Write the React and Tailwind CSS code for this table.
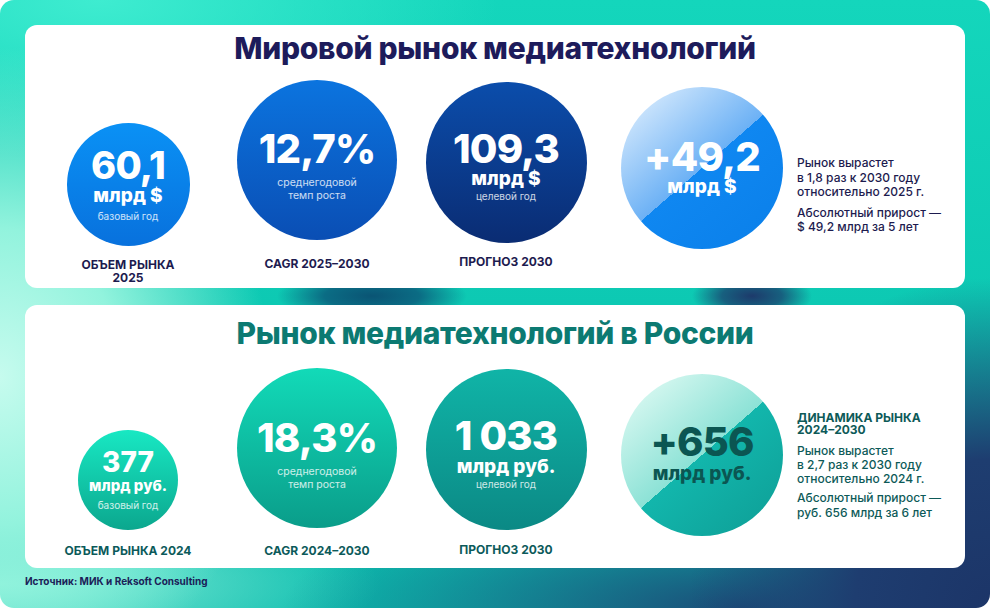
import React from 'react';

const font = "font-['Inter','Noto_Sans',sans-serif]";

function Circle({ className, children }) {
  return <div className={`rounded-full flex flex-col items-center ${className}`}>{children}</div>;
}

export default function App() {
  return (
    <div className={`w-[990px] h-[608px] bg-white ${font}`}>
      <div className="h-full rounded-[14px] overflow-hidden flex flex-col px-[25px] pt-[25px] bg-[#0cc6b1] bg-[radial-gradient(ellipse_95px_26px_at_372px_296px,#0a5474_0%,#0b6c84_50%,transparent_100%),radial-gradient(ellipse_60px_24px_at_752px_296px,#1d3a6b_0%,#17607f_50%,transparent_100%),radial-gradient(ellipse_300px_330px_at_100%_100%,#1c3568_0%,#1e3d70_45%,transparent_100%),radial-gradient(ellipse_460px_120px_at_75%_100%,#1b4c78_0%,transparent_100%),radial-gradient(ellipse_270px_330px_at_0%_62%,#c6fbee_0%,#92f3dd_45%,transparent_100%),radial-gradient(ellipse_380px_90px_at_0%_96%,#8cf1da_0%,transparent_100%),radial-gradient(ellipse_400px_160px_at_10%_0%,#3eecd0_0%,transparent_100%),linear-gradient(180deg,#14d6bc_0%,#0dc9b3_50%,#0cbcae_100%)]">
        {/* мировой рынок */}
        <section className="h-[263px] shrink-0 rounded-[12px] bg-white pt-[8px] flex flex-col">
          <h1 className="text-center text-[30px] leading-none font-extrabold tracking-[-0.01em] text-[#1d1b5b]">Мировой рынок медиатехнологий</h1>
          <div className="flex items-start pl-[18px]">
            <div className="w-[170px] flex flex-col items-center">
              <Circle className="mt-[60px] w-[123px] h-[123px] pt-[23px] text-white bg-[linear-gradient(180deg,#0a91f5_0%,#0871dd_100%)]">
                <div className="text-[38px] leading-none font-extrabold tracking-[-0.02em]">60,1</div>
                <div className="mt-[2px] text-[19px] leading-none font-extrabold">млрд $</div>
                <div className="mt-[6px] text-[10px] leading-none text-white/80">базовый год</div>
              </Circle>
              <div className="mt-[13px] text-[12px] leading-[12.5px] font-bold text-center text-[#1d1b4f]">ОБЪЕМ РЫНКА<br />2025</div>
            </div>
            <div className="ml-[19px] w-[170px] flex flex-col items-center">
              <Circle className="mt-[17px] w-[160px] h-[160px] pt-[49px] text-white bg-[linear-gradient(180deg,#0b74df_0%,#0a4eb4_100%)]">
                <div className="text-[40px] leading-none font-extrabold tracking-[-0.02em]">12,7%</div>
                <div className="mt-[6.5px] text-[10.5px] leading-[13px] text-center text-white/80">среднегодовой<br />темп роста</div>
              </Circle>
              <div className="mt-[18px] text-[12px] leading-[12.5px] font-bold text-[#1d1b4f]">CAGR 2025–2030</div>
            </div>
            <div className="ml-[19px] w-[170px] flex flex-col items-center">
              <Circle className="mt-[19px] w-[161px] h-[161px] pt-[47px] text-white bg-[linear-gradient(180deg,#0b4dab_0%,#0a2c73_100%)]">
                <div className="text-[40px] leading-none font-extrabold tracking-[-0.02em]">109,3</div>
                <div className="text-[19px] leading-none font-extrabold">млрд $</div>
                <div className="mt-[3px] text-[10px] leading-none text-white/80">целевой год</div>
              </Circle>
              <div className="mt-[13px] text-[12px] leading-[12.5px] font-bold text-[#1d1b4f]">ПРОГНОЗ 2030</div>
            </div>
            <div className="ml-[26px] w-[170px] flex flex-col items-center">
              <Circle className="mt-[24px] w-[162px] h-[162px] pt-[50px] text-white bg-[linear-gradient(139deg,#d6eafd_8%,#6cb1f5_50%,#0f87f1_50%,#0a7fe9_100%)]">
                <div className="text-[40px] leading-none font-extrabold tracking-[-0.02em]">+49,2</div>
                <div className="text-[19px] leading-none font-extrabold">млрд $</div>
              </Circle>
            </div>
            <div className="ml-[10px] mt-[93px] text-[12px] leading-[14.5px] font-medium text-[#1d1b4f]">
              <p>Рынок вырастет<br />в 1,8 раз к 2030 году<br />относительно 2025 г.</p>
              <p className="mt-[6px]">Абсолютный прирост —<br />$ 49,2 млрд за 5 лет</p>
            </div>
          </div>
        </section>

        {/* рынок в России */}
        <section className="mt-[17px] h-[263px] shrink-0 rounded-[12px] bg-white pt-[13px] flex flex-col">
          <h2 className="text-center text-[30px] leading-none font-extrabold tracking-[-0.01em] text-[#0c7a72]">Рынок медиатехнологий в России</h2>
          <div className="flex items-start pl-[18px]">
            <div className="w-[170px] flex flex-col items-center">
              <Circle className="mt-[82px] w-[100px] h-[100px] pt-[18px] text-white bg-[linear-gradient(180deg,#18e8c3_0%,#0ba78e_100%)]">
                <div className="text-[28px] leading-none font-extrabold">377</div>
                <div className="mt-[2px] text-[15px] leading-none font-extrabold">млрд руб.</div>
                <div className="mt-[7px] text-[10px] leading-none text-white/80">базовый год</div>
              </Circle>
              <div className="mt-[15px] text-[12px] leading-[12.5px] font-bold text-[#0c5a5a]">ОБЪЕМ РЫНКА 2024</div>
            </div>
            <div className="ml-[19px] w-[170px] flex flex-col items-center">
              <Circle className="mt-[20px] w-[160px] h-[160px] pt-[50px] text-white bg-[linear-gradient(180deg,#12dab8_0%,#0a9d8a_100%)]">
                <div className="text-[40px] leading-none font-extrabold tracking-[-0.02em]">18,3%</div>
                <div className="mt-[6.5px] text-[10.5px] leading-[13px] text-center text-white/80">среднегодовой<br />темп роста</div>
              </Circle>
              <div className="mt-[17px] text-[12px] leading-[12.5px] font-bold text-[#0c5a5a]">CAGR 2024–2030</div>
            </div>
            <div className="ml-[19px] w-[170px] flex flex-col items-center">
              <Circle className="mt-[21px] w-[161px] h-[161px] pt-[47px] text-white bg-[linear-gradient(180deg,#10b4a7_0%,#0b8985_100%)]">
                <div className="text-[40px] leading-none font-extrabold tracking-[-0.02em]">1 033</div>
                <div className="mt-[1px] text-[19px] leading-none font-extrabold">млрд руб.</div>
                <div className="mt-[3px] text-[10px] leading-none text-white/80">целевой год</div>
              </Circle>
              <div className="mt-[14px] text-[12px] leading-[12.5px] font-bold text-[#0c5a5a]">ПРОГНОЗ 2030</div>
            </div>
            <div className="ml-[26px] w-[170px] flex flex-col items-center">
              <Circle className="mt-[26px] w-[162px] h-[162px] pt-[48px] text-[#0b5652] bg-[linear-gradient(139deg,#dbf9f2_8%,#8ce2d6_50%,#12b6ac_50%,#0e9d95_100%)]">
                <div className="text-[40px] leading-none font-extrabold tracking-[-0.02em]">+656</div>
                <div className="mt-[1.5px] text-[19px] leading-none font-extrabold">млрд руб.</div>
              </Circle>
            </div>
            <div className="ml-[10px] mt-[64px] text-[12px] text-[#0d5a58]">
              <p className="leading-[12.3px] font-bold">ДИНАМИКА РЫНКА<br />2024–2030</p>
              <div className="mt-[7px] leading-[14.3px] font-medium">
                <p>Рынок вырастет<br />в 2,7 раз к 2030 году<br />относительно 2024 г.</p>
                <p className="mt-[5px]">Абсолютный прирост —<br />руб. 656 млрд за 6 лет</p>
              </div>
            </div>
          </div>
        </section>

        <p className="mt-[8px] text-[10px] leading-none font-bold text-[#1b2158]">Источник: МИК и Reksoft Consulting</p>
      </div>
    </div>
  );
}
